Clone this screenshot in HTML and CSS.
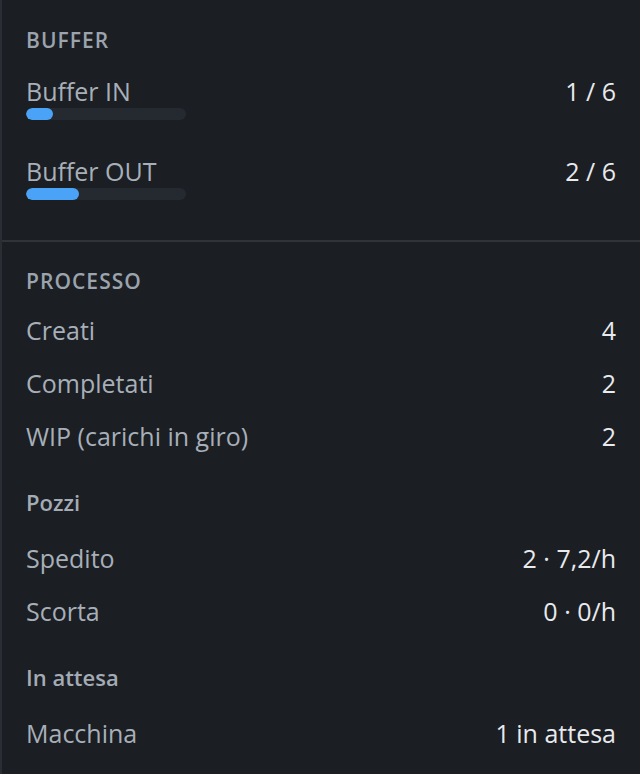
FILE: index.html
```html
<!DOCTYPE html>
<html lang="it">
<head>
<meta charset="utf-8">
<title>Statistiche</title>
<link rel="stylesheet" href="styles.css">
</head>
<body>
<aside class="panel">
  <section class="section section-buffer">
    <h2 class="section-title">Buffer</h2>
    <div class="gauge">
      <div class="row"><span class="label">Buffer IN</span><span class="value">1 / 6</span></div>
      <div class="track"><div class="fill" style="width: 16.67%"></div></div>
    </div>
    <div class="gauge">
      <div class="row"><span class="label">Buffer OUT</span><span class="value">2 / 6</span></div>
      <div class="track"><div class="fill" style="width: 33.33%"></div></div>
    </div>
  </section>
  <section class="section section-process">
    <h2 class="section-title">Processo</h2>
    <div class="list">
      <div class="row"><span class="label">Creati</span><span class="value">4</span></div>
      <div class="row"><span class="label">Completati</span><span class="value">2</span></div>
      <div class="row"><span class="label">WIP (carichi in giro)</span><span class="value">2</span></div>
    </div>
    <h3 class="group-title">Pozzi</h3>
    <div class="list">
      <div class="row"><span class="label">Spedito</span><span class="value">2 · 7,2/h</span></div>
      <div class="row"><span class="label">Scorta</span><span class="value">0 · 0/h</span></div>
    </div>
    <h3 class="group-title">In attesa</h3>
    <div class="list">
      <div class="row"><span class="label">Macchina</span><span class="value">1 in attesa</span></div>
    </div>
  </section>
</aside>
</body>
</html>
```
FILE: styles.css
```css
* { box-sizing: border-box; }

html, body {
  margin: 0;
  height: 100%;
  background: #1b1e23;
}

body {
  font-family: "Open Sans", "Noto Sans", sans-serif;
  color: #a7afb9;
  overflow: hidden;
}

.panel {
  min-height: 100%;
  border-left: 2px solid #2a2d33;
}

.section {
  padding: 0 24px;
}

.section + .section {
  border-top: 2px solid #30343a;
}

.section-buffer {
  padding-top: 26px;
  padding-bottom: 40px;
}

.section-process {
  padding-top: 25px;
}

.section-title {
  margin: 0;
  font-size: 21px;
  line-height: 28px;
  font-weight: 600;
  letter-spacing: 0.05em;
  text-transform: uppercase;
  color: #9ba4ae;
}

.row {
  display: flex;
  justify-content: space-between;
  align-items: baseline;
  font-size: 25px;
  line-height: 32px;
}

.label { color: #a7afb9; }
.value { color: #e8eaed; }

/* buffer gauges: label row sits tight above its bar */
.gauge { margin-top: 23px; }
.gauge + .gauge { margin-top: 37px; }

.gauge .row {
  line-height: 28px;
  margin-bottom: 3px;
}

.track {
  width: 160px;
  height: 12px;
  border-radius: 6px;
  background: #252930;
  overflow: hidden;
}

.fill {
  height: 100%;
  border-radius: 6px;
  background: #4ba3f7;
}

.list {
  display: flex;
  flex-direction: column;
  gap: 21px;
  margin-top: 19px;
}

.group-title {
  margin: 35px 0 0;
  font-size: 22px;
  line-height: 30px;
  font-weight: 600;
  color: #a3abb5;
}

.group-title + .list { margin-top: 25px; }
```
